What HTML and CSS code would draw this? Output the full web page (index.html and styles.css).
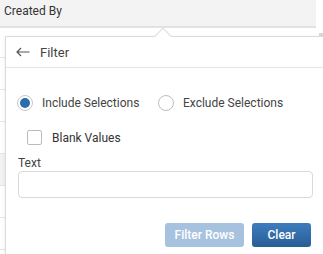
FILE: index.html
```html
<!DOCTYPE html>
<html>
<head>
<meta charset="utf-8">
<link rel="stylesheet" href="styles.css">
</head>
<body>
<div class="grid">
  <div class="head">Created By</div>
  <div class="rows">
    <div class="row r1"></div>
    <div class="row"></div>
    <div class="row"></div>
    <div class="row"></div>
    <div class="row hover"></div>
    <div class="row"></div>
    <div class="row"></div>
  </div>
  <div class="scroll"></div>
</div>
<div class="popup">
  <div class="caret"></div>
  <div class="ptitle">
    <svg class="back" width="14" height="10" viewBox="0 0 14 10"><path d="M13.5 5H1M5 1L1 5l4 4" fill="none" stroke="#555" stroke-width="1.2"/></svg>
    <span>Filter</span>
  </div>
  <div class="pbody">
    <div class="radios">
      <label class="radio"><span class="circle on"><span class="dot"></span></span>Include Selections</label>
      <label class="radio"><span class="circle"></span>Exclude Selections</label>
    </div>
    <label class="check"><span class="box"></span>Blank Values</label>
    <div class="lbl">Text</div>
    <div class="input"></div>
    <div class="btns">
      <button class="btn dis">Filter Rows</button>
      <button class="btn pri">Clear</button>
    </div>
  </div>
</div>
</body>
</html>
```
FILE: styles.css
```css
html, body { margin: 0; padding: 0; }
body {
  width: 323px; height: 254px; overflow: hidden; position: relative;
  background: #fff;
  font-family: Roboto, "Liberation Sans", sans-serif;
  font-size: 12px; color: #333;
}
.grid { position: relative; }
.head {
  height: 28px; width: 316px; background: #f3f3f3;
  box-sizing: border-box; padding: 4px 0 0 4px;
  color: #333; font-size: 12px;
  border-bottom: 2px solid #e2e2e2;
}
.rows { display: flex; flex-direction: column; }
.row { height: 31px; border-bottom: 1px solid #e6e6e6; }
.row.r1 { height: 29px; }
.row.hover { background: #f2f2f2; }
.scroll { position: absolute; right: 0; top: 33px; width: 4px; height: 4px; background: #d8d8d8; }
.popup {
  position: absolute; left: 5px; top: 36px; width: 330px; height: 230px;
  background: #fff; border: 1px solid #dcdcdc;
  box-shadow: 0 1px 4px rgba(0,0,0,0.08);
  box-sizing: border-box;
}
.caret {
  position: absolute; left: 151px; top: -7px; width: 11px; height: 11px;
  background: #fff; border-left: 1px solid #dcdcdc; border-top: 1px solid #dcdcdc;
  transform: rotate(45deg);
}
.ptitle {
  height: 30px; border-bottom: 1px solid #e4e4e4;
  display: flex; align-items: center; gap: 10px; padding-left: 10px;
  font-size: 13px; color: #444; position: relative;
}
.pbody { padding: 27px 0 0 11px; width: 295px; }
.radios { display: flex; gap: 8px; }
.radio { display: flex; align-items: center; gap: 9px; color: #444; width: 133px; }
.circle {
  width: 16px; height: 16px; border: 1px solid #bdbdbd; border-radius: 50%;
  display: flex; align-items: center; justify-content: center; box-sizing: border-box;
  flex: none;
}
.circle.on { border-color: #c8c8c8; }
.dot { width: 10px; height: 10px; border-radius: 50%; background: #2d6bb0; }
.check { display: flex; align-items: center; gap: 10px; margin: 19px 0 0 10px; color: #333; height: 15px; }
.box { width: 15px; height: 15px; border: 1px solid #bbb; border-radius: 2px; box-sizing: border-box; }
.lbl { margin-top: 11px; margin-left: 1px; color: #444; line-height: 14px; }
.input {
  margin-top: 1px; margin-left: 1px; height: 27px; width: 295px; box-sizing: border-box;
  border: 1px solid #d9d9d9; border-radius: 4px;
}
.btns { display: flex; justify-content: flex-end; gap: 8px; margin-top: 25px; width: 294px; }
.btn {
  height: 24px; border: none; border-radius: 3px; color: #fff;
  font-family: Roboto, "Liberation Sans", sans-serif; font-size: 12px; font-weight: 500;
  padding: 0;
}
.btn.dis { width: 79px; background: #a7c2de; }
.btn.pri { width: 59px; background: linear-gradient(#3d7dbd, #285d96); }
```
